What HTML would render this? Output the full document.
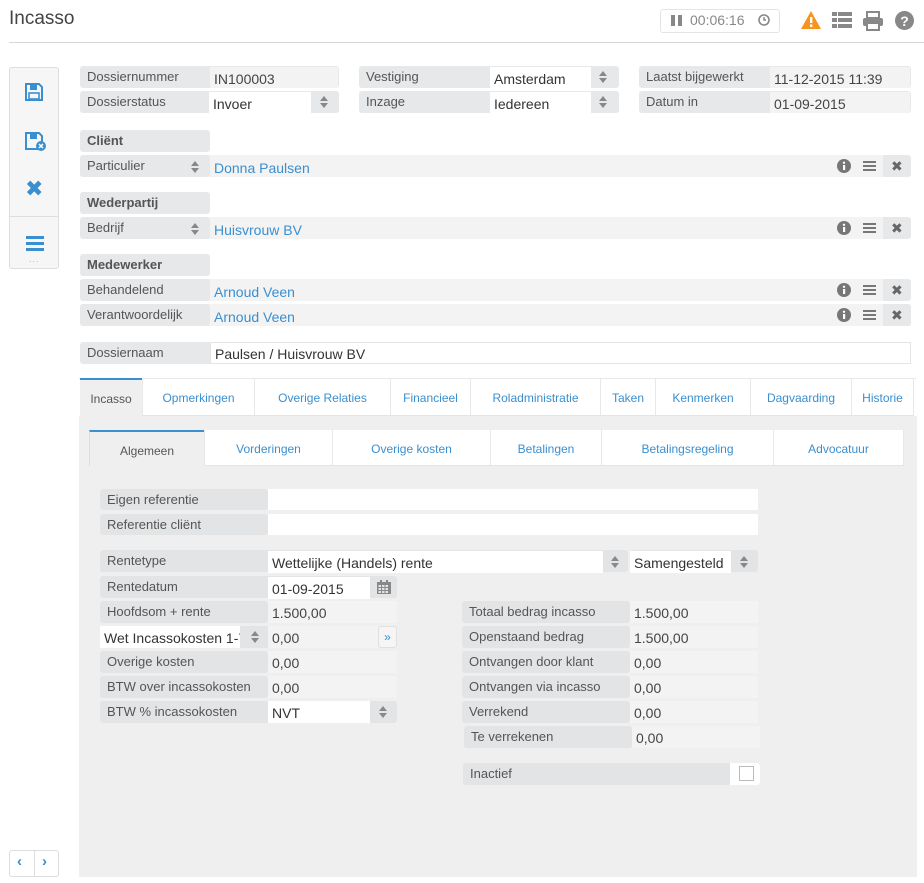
<!DOCTYPE html>
<html><head><meta charset="utf-8"><style>
*{box-sizing:border-box;margin:0;padding:0}
body{width:924px;height:883px;background:#fff;font-family:"Liberation Sans","DejaVu Sans",sans-serif;color:#555;position:relative;overflow:hidden;font-size:13px}
.a{position:absolute}
.l{position:absolute;background:#e6e8e9;border-radius:3px;padding-left:7px;line-height:22px;height:22px;font-size:13px;color:#555}
.v{position:absolute;background:#f3f3f3;line-height:24px;height:22px;padding-left:4px;font-size:14px;color:#444}
.w{position:absolute;background:#fff;line-height:24px;height:22px;padding-left:4px;font-size:14px;color:#333}
.b{font-weight:bold}
.lk{color:#3a8fd0}
.sp{position:absolute;width:8px;height:12px}
.sp:before{content:"";position:absolute;left:0;top:0;border-left:4px solid transparent;border-right:4px solid transparent;border-bottom:5px solid #888}
.sp:after{content:"";position:absolute;left:0;top:7px;border-left:4px solid transparent;border-right:4px solid transparent;border-top:5px solid #888}
.tab{position:absolute;top:379px;height:37px;line-height:38px;text-align:center;font-size:12px;color:#3a8fd0;background:#fff;border-left:1px solid #e8e8e8;border-bottom:1px solid #e4e4e4}
.st{position:absolute;top:430px;height:36px;line-height:38px;text-align:center;font-size:12px;color:#3a8fd0;background:#fff;border-left:1px solid #e8e8e8;border-bottom:1px solid #e4e4e4}
.ic{position:absolute;color:#666;font-size:14px;font-weight:bold}
</style></head><body>
<div class="a" style="left:9px;top:8px;font-size:19px;color:#444">Incasso</div>
<div class="a" style="left:9px;top:42px;width:915px;height:1px;background:#d8d8d8"></div>
<div class="a" style="left:660px;top:9px;width:120px;height:24px;border:1px solid #e4e4e4;border-radius:3px"></div>
<div class="a" style="left:671px;top:15px;width:4px;height:11px;background:#888"></div>
<div class="a" style="left:678px;top:15px;width:4px;height:11px;background:#888"></div>
<div class="a" style="left:690px;top:12px;font-size:14px;color:#888">00:06:16</div>
<svg class="a" style="left:758px;top:14px" width="12" height="12"><circle cx="6" cy="6" r="5" fill="none" stroke="#888" stroke-width="1.6"/><path d="M6 3v3h2" stroke="#888" stroke-width="1.4" fill="none"/></svg>
<svg class="a" style="left:801px;top:10px" width="20" height="20"><path d="M10 1L20 19H0Z" fill="#f7941d"/><rect x="9" y="7" width="2.4" height="6" fill="#fff"/><rect x="9" y="14.5" width="2.4" height="2.4" fill="#fff"/></svg>
<svg class="a" style="left:832px;top:12px" width="20" height="17" fill="#888"><rect x="0" y="0" width="5" height="4"/><rect x="6" y="0" width="14" height="4"/><rect x="0" y="6" width="5" height="4"/><rect x="6" y="6" width="14" height="4"/><rect x="0" y="12" width="5" height="4"/><rect x="6" y="12" width="14" height="4"/></svg>
<svg class="a" style="left:863px;top:11px" width="20" height="20" fill="#888"><rect x="4" y="1" width="12" height="6" fill="none" stroke="#888" stroke-width="2"/><rect x="0" y="7" width="20" height="8" rx="2"/><rect x="4" y="12" width="12" height="7" fill="#fff" stroke="#888" stroke-width="2"/></svg>
<svg class="a" style="left:895px;top:11px" width="19" height="19"><circle cx="9.5" cy="9.5" r="9.5" fill="#888"/><text x="9.5" y="15" text-anchor="middle" font-size="14" font-weight="bold" fill="#fff" font-family="Liberation Sans">?</text></svg>

<!-- left toolbar -->
<div class="a" style="left:9px;top:67px;width:50px;height:202px;border:1px solid #ddd;border-radius:3px;background:#f6f6f6"></div>
<div class="a" style="left:9px;top:216px;width:50px;height:1px;background:#ddd"></div>
<svg class="a" style="left:25px;top:83px" width="18" height="18"><path d="M1 1h13l3 3v13H1z" fill="none" stroke="#3a8fd0" stroke-width="2"/><rect x="5" y="2" width="7" height="5" fill="#3a8fd0"/><rect x="4" y="10" width="10" height="6" fill="none" stroke="#3a8fd0" stroke-width="1.6"/></svg>
<svg class="a" style="left:25px;top:132px" width="22" height="20"><path d="M1 1h13l3 3v13H1z" fill="none" stroke="#3a8fd0" stroke-width="2"/><rect x="5" y="2" width="7" height="5" fill="#3a8fd0"/><circle cx="16" cy="14" r="5" fill="#3a8fd0"/><path d="M14 12l4 4M18 12l-4 4" stroke="#fff" stroke-width="1.5"/></svg>
<div class="a" style="left:25px;top:178px;font-size:22px;font-weight:bold;color:#3a8fd0;line-height:22px">✖</div>
<div class="a" style="left:26px;top:236px;width:18px;height:3px;background:#3a8fd0;box-shadow:0 6px 0 #3a8fd0,0 12px 0 #3a8fd0"></div>
<div class="a" style="left:29px;top:254px;font-size:9px;color:#9bc;letter-spacing:1px">...</div>
<div class="a" style="left:9px;top:850px;width:50px;height:27px;border:1px solid #ddd;border-radius:3px"></div>
<div class="a" style="left:34px;top:851px;width:1px;height:25px;background:#ddd"></div>
<div class="a" style="left:17px;top:853px;color:#3a8fd0;font-weight:bold;font-size:15px">‹</div>
<div class="a" style="left:42px;top:853px;color:#3a8fd0;font-weight:bold;font-size:15px">›</div>

<!-- top form -->
<div class="l" style="left:80px;top:66px;width:259px">Dossiernummer</div><div class="v" style="left:210px;top:67px;width:128px;height:21px">IN100003</div>
<div class="l" style="left:80px;top:91px;width:259px">Dossierstatus</div><div class="w" style="left:209px;top:92px;width:102px;height:21px">Invoer</div><div class="sp" style="left:320px;top:96px"></div>
<div class="l" style="left:359px;top:66px;width:260px">Vestiging</div><div class="w" style="left:490px;top:67px;width:101px;height:21px">Amsterdam</div><div class="sp" style="left:599px;top:71px"></div>
<div class="l" style="left:359px;top:91px;width:260px">Inzage</div><div class="w" style="left:490px;top:92px;width:101px;height:21px">Iedereen</div><div class="sp" style="left:599px;top:96px"></div>
<div class="l" style="left:639px;top:66px;width:272px">Laatst bijgewerkt</div><div class="v" style="left:770px;top:67px;width:140px;height:21px">11-12-2015 11:39</div>
<div class="l" style="left:639px;top:91px;width:272px">Datum in</div><div class="v" style="left:770px;top:92px;width:140px;height:21px">01-09-2015</div>

<div class="l b" style="left:80px;top:130px;width:130px">Cliënt</div>
<div class="l" style="left:80px;top:155px;width:831px;background:#f3f3f3"></div>
<div class="l" style="left:80px;top:155px;width:130px">Particulier</div><div class="sp" style="left:191px;top:161px"></div>
<div class="a lk" style="left:214px;top:160px;font-size:14px">Donna Paulsen</div>

<div class="l b" style="left:80px;top:192px;width:130px">Wederpartij</div>
<div class="l" style="left:80px;top:217px;width:831px;background:#f3f3f3"></div>
<div class="l" style="left:80px;top:217px;width:130px">Bedrijf</div><div class="sp" style="left:191px;top:223px"></div>
<div class="a lk" style="left:214px;top:222px;font-size:14px">Huisvrouw BV</div>

<div class="l b" style="left:80px;top:254px;width:130px">Medewerker</div>
<div class="l" style="left:80px;top:279px;width:831px;background:#f3f3f3"></div>
<div class="l" style="left:80px;top:279px;width:130px">Behandelend</div>
<div class="a lk" style="left:214px;top:284px;font-size:14px">Arnoud Veen</div>
<div class="l" style="left:80px;top:304px;width:831px;background:#f3f3f3"></div>
<div class="l" style="left:80px;top:304px;width:130px">Verantwoordelijk</div>
<div class="a lk" style="left:214px;top:309px;font-size:14px">Arnoud Veen</div>

<!-- row icons -->
<div class="a" style="left:883px;top:155px;width:28px;height:22px;background:#e6e8e9;border-radius:0 3px 3px 0"></div>
<div class="a" style="left:883px;top:217px;width:28px;height:22px;background:#e6e8e9;border-radius:0 3px 3px 0"></div>
<div class="a" style="left:883px;top:279px;width:28px;height:22px;background:#e6e8e9;border-radius:0 3px 3px 0"></div>
<div class="a" style="left:883px;top:304px;width:28px;height:22px;background:#e6e8e9;border-radius:0 3px 3px 0"></div>
<svg class="a" style="left:837px;top:159px" width="14" height="14"><circle cx="7" cy="7" r="7" fill="#777"/><rect x="6" y="6" width="2.2" height="5" fill="#fff"/><circle cx="7" cy="3.8" r="1.2" fill="#fff"/></svg>
<svg class="a" style="left:837px;top:221px" width="14" height="14"><circle cx="7" cy="7" r="7" fill="#777"/><rect x="6" y="6" width="2.2" height="5" fill="#fff"/><circle cx="7" cy="3.8" r="1.2" fill="#fff"/></svg>
<svg class="a" style="left:837px;top:283px" width="14" height="14"><circle cx="7" cy="7" r="7" fill="#777"/><rect x="6" y="6" width="2.2" height="5" fill="#fff"/><circle cx="7" cy="3.8" r="1.2" fill="#fff"/></svg>
<svg class="a" style="left:837px;top:308px" width="14" height="14"><circle cx="7" cy="7" r="7" fill="#777"/><rect x="6" y="6" width="2.2" height="5" fill="#fff"/><circle cx="7" cy="3.8" r="1.2" fill="#fff"/></svg>
<div class="a" style="left:863px;top:161px;width:13px;height:2px;background:#777;box-shadow:0 4px 0 #777,0 8px 0 #777"></div>
<div class="a" style="left:863px;top:223px;width:13px;height:2px;background:#777;box-shadow:0 4px 0 #777,0 8px 0 #777"></div>
<div class="a" style="left:863px;top:285px;width:13px;height:2px;background:#777;box-shadow:0 4px 0 #777,0 8px 0 #777"></div>
<div class="a" style="left:863px;top:310px;width:13px;height:2px;background:#777;box-shadow:0 4px 0 #777,0 8px 0 #777"></div>
<div class="ic" style="left:891px;top:158px">✖</div>
<div class="ic" style="left:891px;top:220px">✖</div>
<div class="ic" style="left:891px;top:282px">✖</div>
<div class="ic" style="left:891px;top:307px">✖</div>

<div class="l" style="left:80px;top:342px;width:831px">Dossiernaam</div>
<div class="w" style="left:210px;top:342px;width:701px;border:1px solid #e4e4e4;line-height:22px">Paulsen / Huisvrouw BV</div>

<!-- tabs -->
<div class="a" style="left:79px;top:378px;width:837px;height:1px;background:#e8e8e8"></div>
<div class="a" style="left:79px;top:416px;width:838px;height:461px;background:#efefef"></div>
<div class="tab" style="left:80px;width:62px;background:#efefef;color:#555;border-top:2px solid #3a8fd0;border-bottom:none;border-left:none;top:378px;height:38px">Incasso</div>
<div class="tab" style="left:142px;width:112px">Opmerkingen</div>
<div class="tab" style="left:254px;width:136px">Overige Relaties</div>
<div class="tab" style="left:390px;width:80px">Financieel</div>
<div class="tab" style="left:470px;width:130px">Roladministratie</div>
<div class="tab" style="left:600px;width:55px">Taken</div>
<div class="tab" style="left:655px;width:95px">Kenmerken</div>
<div class="tab" style="left:750px;width:101px">Dagvaarding</div>
<div class="tab" style="left:851px;width:63px;border-right:1px solid #e8e8e8">Historie</div>

<div class="st" style="left:89px;width:115px;background:#efefef;color:#555;border-top:2px solid #3a8fd0;border-bottom:none;border-left:1px solid #ddd">Algemeen</div>
<div class="st" style="left:204px;width:128px">Vorderingen</div>
<div class="st" style="left:332px;width:158px">Overige kosten</div>
<div class="st" style="left:490px;width:111px">Betalingen</div>
<div class="st" style="left:601px;width:172px">Betalingsregeling</div>
<div class="st" style="left:773px;width:131px;border-right:1px solid #e8e8e8">Advocatuur</div>

<!-- form -->
<div class="l" style="left:100px;top:489px;width:168px;height:21px;line-height:21px;background:#e2e4e5">Eigen referentie</div><div class="w" style="left:268px;top:489px;width:490px;height:21px"></div>
<div class="l" style="left:100px;top:514px;width:168px;height:21px;line-height:21px;background:#e2e4e5">Referentie cliënt</div><div class="w" style="left:268px;top:514px;width:490px;height:21px"></div>
<div class="l" style="left:100px;top:550px;width:528px;background:#e2e4e5">Rentetype</div><div class="w" style="left:268px;top:551px;width:335px">Wettelijke (Handels) rente</div><div class="sp" style="left:611px;top:556px"></div>
<div class="l" style="left:630px;top:550px;width:128px;background:#e2e4e5;padding:0"></div><div class="w" style="left:630px;top:551px;width:101px">Samengesteld</div><div class="sp" style="left:740px;top:556px"></div>
<div class="l" style="left:100px;top:576px;width:297px;background:#e2e4e5">Rentedatum</div><div class="w" style="left:268px;top:577px;width:102px">01-09-2015</div>
<svg class="a" style="left:377px;top:580px" width="14" height="14" fill="#888"><rect x="0" y="2" width="14" height="12"/><rect x="3" y="0" width="2" height="3"/><rect x="9" y="0" width="2" height="3"/><g fill="#e2e4e5"><rect x="1.5" y="5" width="2.5" height="2"/><rect x="5" y="5" width="2.5" height="2"/><rect x="8.5" y="5" width="2.5" height="2"/><rect x="1.5" y="8" width="2.5" height="2"/><rect x="5" y="8" width="2.5" height="2"/><rect x="8.5" y="8" width="2.5" height="2"/><rect x="1.5" y="11" width="2.5" height="2"/><rect x="5" y="11" width="2.5" height="2"/><rect x="8.5" y="11" width="2.5" height="2"/></g></svg>
<div class="l" style="left:100px;top:601px;width:168px;background:#e2e4e5">Hoofdsom + rente</div><div class="v" style="left:268px;top:601px;width:129px">1.500,00</div>
<div class="w" style="left:100px;top:626px;width:140px;overflow:hidden;white-space:nowrap">Wet Incassokosten 1-7</div><div class="l" style="left:240px;top:626px;width:28px;background:#e2e4e5;border-radius:0"></div><div class="sp" style="left:251px;top:631px"></div>
<div class="v" style="left:268px;top:626px;width:110px">0,00</div><div class="a" style="left:378px;top:626px;width:19px;height:22px;background:#f5f5f5;border:1px solid #e0e0e0;border-radius:3px;color:#3a8fd0;font-size:12px;text-align:center;line-height:20px">»</div>
<div class="l" style="left:100px;top:651px;width:168px;background:#e2e4e5">Overige kosten</div><div class="v" style="left:268px;top:651px;width:129px">0,00</div>
<div class="l" style="left:100px;top:676px;width:168px;background:#e2e4e5">BTW over incassokosten</div><div class="v" style="left:268px;top:676px;width:129px">0,00</div>
<div class="l" style="left:100px;top:701px;width:297px;background:#e2e4e5">BTW % incassokosten</div><div class="w" style="left:268px;top:701px;width:102px">NVT</div><div class="sp" style="left:379px;top:706px"></div>

<div class="l" style="left:462px;top:601px;width:168px;background:#e2e4e5">Totaal bedrag incasso</div><div class="v" style="left:630px;top:601px;width:128px">1.500,00</div>
<div class="l" style="left:462px;top:626px;width:168px;background:#e2e4e5">Openstaand bedrag</div><div class="v" style="left:630px;top:626px;width:128px">1.500,00</div>
<div class="l" style="left:462px;top:651px;width:168px;background:#e2e4e5">Ontvangen door klant</div><div class="v" style="left:630px;top:651px;width:128px">0,00</div>
<div class="l" style="left:462px;top:676px;width:168px;background:#e2e4e5">Ontvangen via incasso</div><div class="v" style="left:630px;top:676px;width:128px">0,00</div>
<div class="l" style="left:462px;top:701px;width:168px;background:#e2e4e5">Verrekend</div><div class="v" style="left:630px;top:701px;width:128px">0,00</div>
<div class="l" style="left:464px;top:726px;width:168px;background:#e2e4e5">Te verrekenen</div><div class="v" style="left:632px;top:726px;width:128px">0,00</div>
<div class="l" style="left:463px;top:763px;width:297px;background:#e2e4e5">Inactief</div><div class="a" style="left:730px;top:763px;width:30px;height:22px;background:#fff;border-radius:0 3px 3px 0"></div><div class="a" style="left:739px;top:766px;width:15px;height:15px;border:1px solid #bbb"></div>
</body></html>
